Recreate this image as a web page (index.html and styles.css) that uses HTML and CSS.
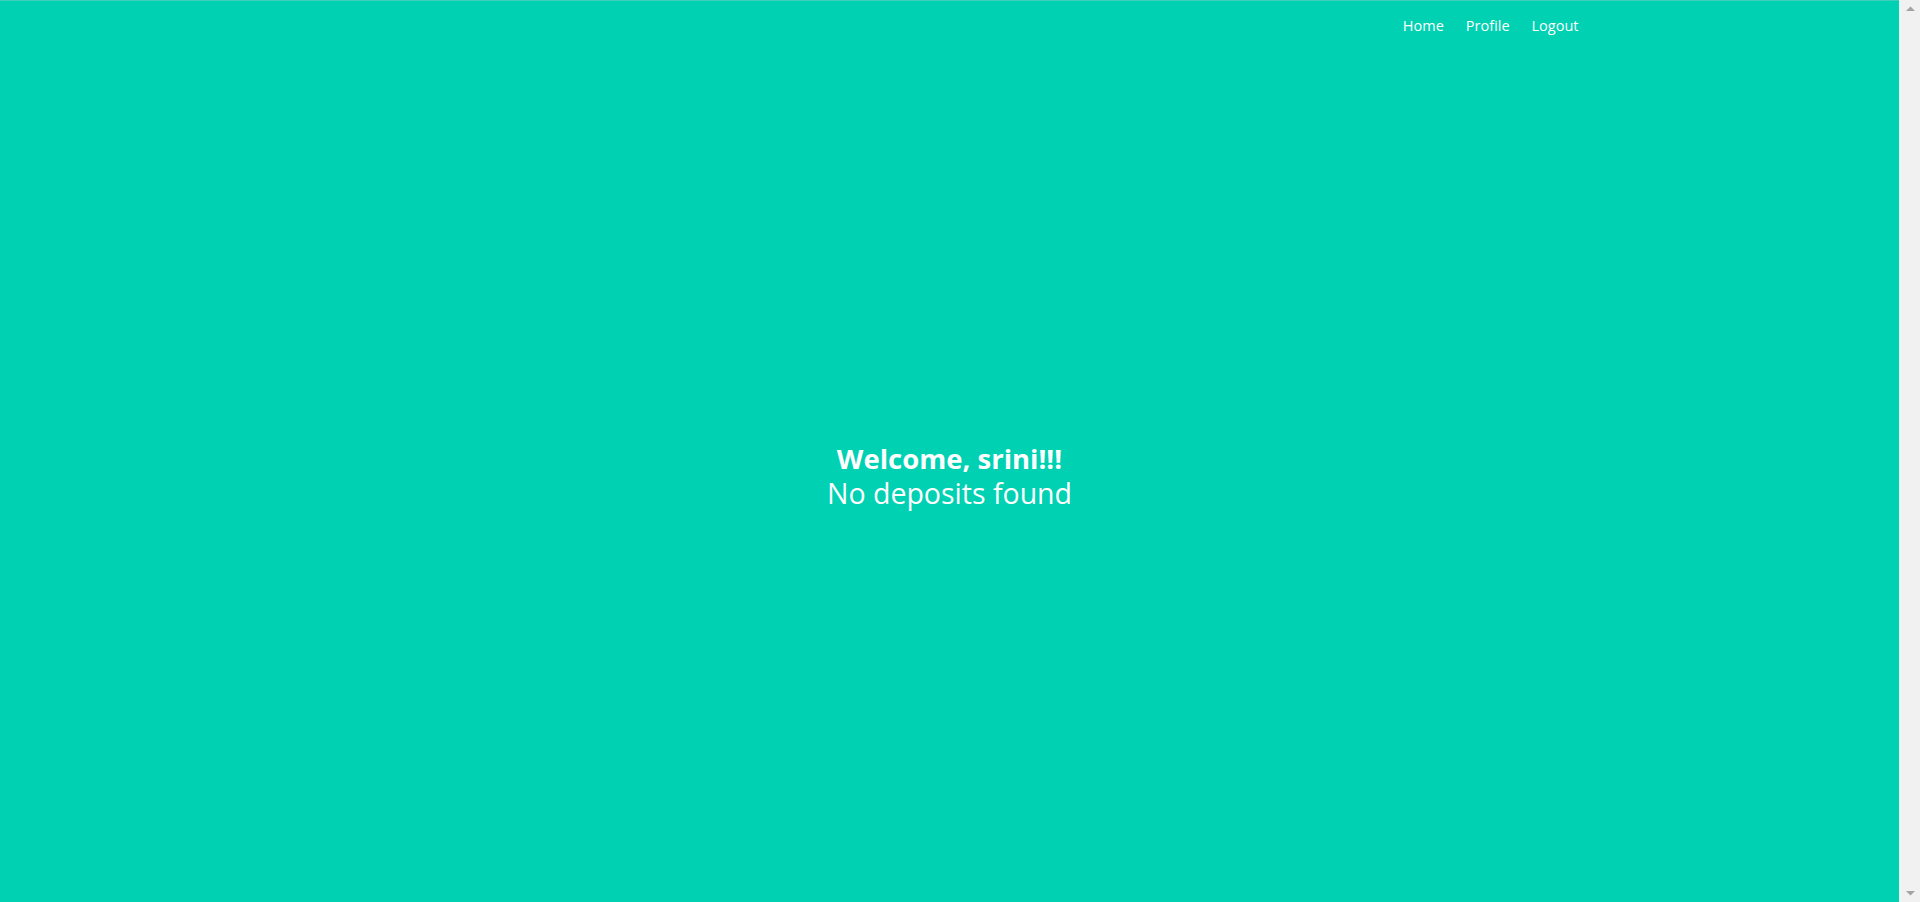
FILE: index.html
```html
<!DOCTYPE html>
<html lang="en">
<head>
<meta charset="utf-8">
<title>Deposits</title>
<link rel="stylesheet" href="styles.css">
</head>
<body>
<div class="window">
  <div class="page">
    <nav class="navbar">
      <div class="container">
        <div class="navbar-end">
          <a class="navbar-item" href="#">Home</a>
          <a class="navbar-item" href="#">Profile</a>
          <a class="navbar-item" href="#">Logout</a>
        </div>
      </div>
    </nav>
    <main class="hero-body">
      <div class="message">
        <h1 class="welcome">Welcome, srini!!!</h1>
        <p class="empty">No deposits found</p>
      </div>
    </main>
  </div>
  <div class="scrollbar" aria-hidden="true">
    <svg class="arrow" width="19" height="17" viewBox="0 0 19 17"><path d="M5 11 L9.5 6.5 L14 11 Z" fill="#a3a3a3"/></svg>
    <svg class="arrow" width="19" height="17" viewBox="0 0 19 17"><path d="M5 6 L9.5 10.5 L14 6 Z" fill="#a3a3a3"/></svg>
  </div>
</div>
</body>
</html>
```

FILE: styles.css
```css
html, body {
  margin: 0;
  height: 100%;
  overflow: hidden;
}
body {
  font-family: "Open Sans", "Noto Sans", sans-serif;
  color: #fff;
  background: #00d1b2;
}
.window {
  display: flex;
  height: 902px;
}
.page {
  flex: 1;
  display: flex;
  flex-direction: column;
  box-sizing: border-box;
  border-top: 1px solid #3ecdb8;
  background: #00d1b2;
}
.scrollbar {
  width: 19px;
  flex: none;
  border-left: 2px solid #e4f7f4;
  background: #f1f1f1;
  display: flex;
  flex-direction: column;
  justify-content: space-between;
}
.arrow {
  display: block;
}
.navbar {
  height: 52px;
  flex: none;
}
.container {
  width: 1280px;
  margin: 0 auto;
  height: 100%;
  display: flex;
  justify-content: flex-end;
}
.navbar-end {
  display: flex;
  align-items: stretch;
}
.navbar-item {
  display: flex;
  align-items: center;
  padding: 0 11px 3px;
  color: #fff;
  text-decoration: none;
  font-size: 14.5px;
}
.hero-body {
  flex: 1;
  display: flex;
  align-items: center;
  justify-content: center;
}
.message {
  text-align: center;
  padding-bottom: 3px;
}
.welcome {
  margin: 0;
  font-size: 27.5px;
  font-weight: 700;
  line-height: 34px;
}
.empty {
  margin: 0;
  font-size: 28.5px;
  line-height: 34px;
}
```
